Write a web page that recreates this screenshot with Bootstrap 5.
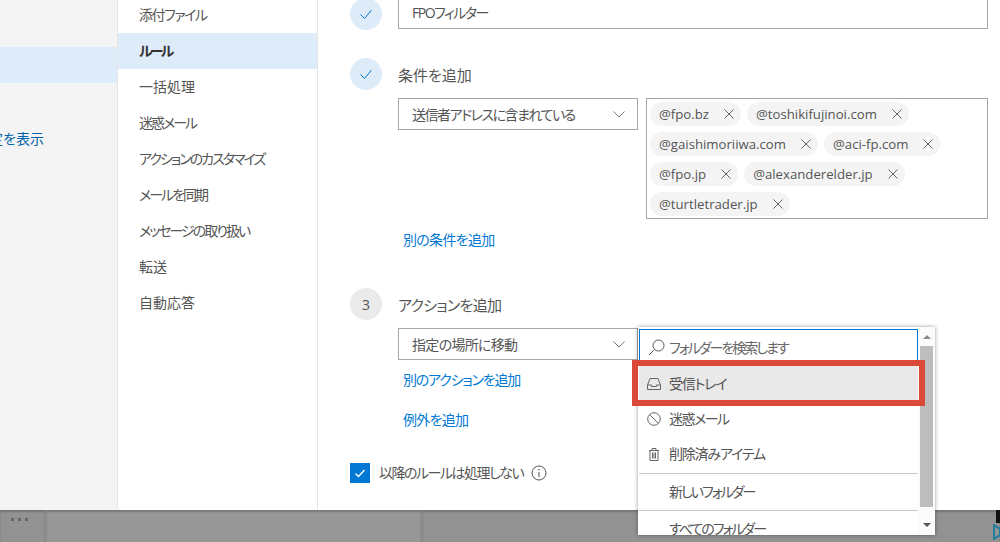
<!DOCTYPE html>
<html lang="ja">
<head>
<meta charset="UTF-8">
<title>ルール</title>
<link href="https://cdn.jsdelivr.net/npm/bootstrap@5.3.0/dist/css/bootstrap.min.css" rel="stylesheet">
<style>
  html, body { height: 542px; overflow: hidden; }
  body { font-family: "Open Sans", "Noto Sans CJK JP", sans-serif; font-size: 14px; color: #555; background: #fff; position: relative; font-feature-settings: "palt"; }
  a { color: #0078d4; text-decoration: none; }
  /* kana in the original font is narrower than Noto, so tighten kana-heavy strings */
  .tight-1 { letter-spacing: -.7px; }
  .tight-2 { letter-spacing: -1.2px; }
  .tight-3 { letter-spacing: -1.5px; }
  .tight-4 { letter-spacing: -2px; }
  .page-main { height: 510px; overflow: hidden; }
  .far-left { width: 118px; background: #f4f4f4; border-right: 1px solid #e6e6e6; padding-top: 47px; overflow: hidden; }
  .far-band { height: 36px; background: #deecf9; }
  .far-link { padding-right: 73px; color: #0062ad; white-space: nowrap; line-height: 36px; height: 36px; margin-top: 38px; }
  .side-list { width: 200px; border-right: 1px solid #e6e6e6; margin-top: -3px; }
  .side-item { height: 36px; line-height: 35px; padding-left: 21px; }
  .side-item.on { background: #deecf9; font-weight: 700; color: #333; letter-spacing: -2.8px; }
  .pane { padding-left: 32px; margin-top: -2px; width: 670px; }
  .step { width: 32px; height: 32px; border-radius: 50%; flex: none; display: flex; align-items: center; justify-content: center; background: #deecf9; }
  .step.gray { background: #eaeaea; color: #555; }
  .step-title { height: 32px; line-height: 35px; font-size: 15px; }
  .field { height: 32px; border: 1px solid #a6a6a6; padding: 0 12px 0 13px; line-height: 29px; background: #fff; }
  .name-field { width: 590px; margin-top: -1px; }
  .pick { width: 240px; }
  .tag-box { width: 342px; height: 121px; border: 1px solid #a6a6a6; padding: 3px; gap: 6px; align-content: flex-start; margin-left: 8px; }
  .tag { height: 24px; line-height: 24px; border-radius: 12px; background: #f4f4f4; padding: 0 7px 0 9px; font-size: 13.2px; gap: 15px; color: #555; }
  .indent { margin-left: 48px; }
  .add-link { padding-left: 5px; line-height: 20px; }
  .tick-box { width: 20px; height: 20px; background: #0078d4; }
  .foot-bar { height: 32px; background: #979797; position: relative; }
  .foot-cell { border-right: 1px solid #8a8a8a; background: #929292; box-shadow: inset 0 2px 2px rgba(0,0,0,.2); }
  .foot-dots { width: 46px; padding: 8px 0 0 11px; gap: 4px; }
  .foot-dot { width: 3px; height: 3px; background: #666; }
  .foot-mid { width: 376px; background: #979797; }
  .foot-end { background: #929292; box-shadow: inset 0 2px 2px rgba(0,0,0,.2); }
  .folder-menu { position: absolute; left: 638px; top: 327px; width: 297px; height: 208px; background: #fff; box-shadow: 0 0 4px rgba(0,0,0,.4); overflow: hidden; }
  .folder-list { width: 280px; padding-left: 1px; }
  .folder-search { height: 37px; border: 1px solid #0078d4; border-bottom: 0; margin-top: 2px; padding: 0 0 2px 8px; gap: 4px; color: #666; }
  .folder-item { height: 35px; padding-left: 8px; gap: 8px; color: #555; flex: none; }
  .folder-item.on { background: #e9e9e9; }
  .folder-gap { height: 2px; }
  .folder-line { border-top: 1px solid #c8c8c8; height: 37px; line-height: 36px; padding-left: 30px; color: #555; }
  .folder-scroll { width: 17px; background: #fbfbfb; }
  .scroll-thumb { width: 13px; height: 161px; background: #bdbdbd; margin: 0 auto; }
  .arr-up, .arr-down { width: 0; height: 0; border-left: 4px solid transparent; border-right: 4px solid transparent; margin: 0 auto; }
  .arr-up { border-bottom: 4px solid #8a8a8a; margin-top: 8px; margin-bottom: 7px; }
  .arr-down { border-top: 4px solid #555; margin-top: 16px; }
  .red-frame { position: absolute; left: 632px; top: 360px; width: 293px; height: 46px; border: 6px solid #db4a39; }
  .corner-black { position: absolute; left: 996px; top: 0; width: 4px; height: 13px; background: #111; }
  .corner-logo { position: absolute; left: 993px; top: 524px; }
</style>
</head>
<body>
  <div class="page-main d-flex">
    <div class="far-left">
      <div class="far-band"></div>
      <div class="far-link d-flex justify-content-end">すべての設定を表示</div>
    </div>

    <div class="side-list">
      <div class="side-item tight-3">添付ファイル</div>
      <div class="side-item on">ルール</div>
      <div class="side-item">一括処理</div>
      <div class="side-item tight-4">迷惑メール</div>
      <div class="side-item tight-4">アクションのカスタマイズ</div>
      <div class="side-item tight-4">メールを同期</div>
      <div class="side-item tight-4">メッセージの取り扱い</div>
      <div class="side-item">転送</div>
      <div class="side-item">自動応答</div>
    </div>

    <div class="pane">
      <div class="d-flex gap-3">
        <div class="step"><svg width="14" height="14" viewBox="0 0 14 14"><path d="M1.5 7.5 5.5 11.5 12.5 3" fill="none" stroke="#0078d4" stroke-width="1"/></svg></div>
        <div class="field name-field tight-3">FPOフィルター</div>
      </div>

      <div class="d-flex gap-3" style="margin-top:28px">
        <div class="step"><svg width="14" height="14" viewBox="0 0 14 14"><path d="M1.5 7.5 5.5 11.5 12.5 3" fill="none" stroke="#0078d4" stroke-width="1"/></svg></div>
        <div class="step-title">条件を追加</div>
      </div>
      <div class="indent d-flex mt-2">
        <div class="field pick d-flex justify-content-between align-items-center">
          <span class="tight-3">送信者アドレスに含まれている</span>
          <svg width="12" height="7" viewBox="0 0 12 7"><path d="M.5.5 6 6 11.5.5" fill="none" stroke="#777"/></svg>
        </div>
        <div class="tag-box d-flex flex-wrap">
          <span class="tag d-inline-flex align-items-center">@fpo.bz <svg width="10" height="10" viewBox="0 0 10 10"><path d="M.5.5l9 9m0-9l-9 9" stroke="#666"/></svg></span>
          <span class="tag d-inline-flex align-items-center">@toshikifujinoi.com <svg width="10" height="10" viewBox="0 0 10 10"><path d="M.5.5l9 9m0-9l-9 9" stroke="#666"/></svg></span>
          <span class="tag d-inline-flex align-items-center">@gaishimoriiwa.com <svg width="10" height="10" viewBox="0 0 10 10"><path d="M.5.5l9 9m0-9l-9 9" stroke="#666"/></svg></span>
          <span class="tag d-inline-flex align-items-center">@aci-fp.com <svg width="10" height="10" viewBox="0 0 10 10"><path d="M.5.5l9 9m0-9l-9 9" stroke="#666"/></svg></span>
          <span class="tag d-inline-flex align-items-center">@fpo.jp <svg width="10" height="10" viewBox="0 0 10 10"><path d="M.5.5l9 9m0-9l-9 9" stroke="#666"/></svg></span>
          <span class="tag d-inline-flex align-items-center">@alexanderelder.jp <svg width="10" height="10" viewBox="0 0 10 10"><path d="M.5.5l9 9m0-9l-9 9" stroke="#666"/></svg></span>
          <span class="tag d-inline-flex align-items-center">@turtletrader.jp <svg width="10" height="10" viewBox="0 0 10 10"><path d="M.5.5l9 9m0-9l-9 9" stroke="#666"/></svg></span>
        </div>
      </div>
      <div class="indent add-link tight-1" style="margin-top:11px"><a href="#">別の条件を追加</a></div>

      <div class="d-flex gap-3" style="margin-top:38px">
        <div class="step gray">3</div>
        <div class="step-title tight-1">アクションを追加</div>
      </div>
      <div class="indent mt-2">
        <div class="field pick d-flex justify-content-between align-items-center">
          <span class="tight-1">指定の場所に移動</span>
          <svg width="12" height="7" viewBox="0 0 12 7"><path d="M.5.5 6 6 11.5.5" fill="none" stroke="#777"/></svg>
        </div>
      </div>
      <div class="indent add-link tight-2" style="margin-top:10px"><a href="#">別のアクションを追加</a></div>
      <div class="indent add-link tight-1" style="margin-top:20px"><a href="#">例外を追加</a></div>

      <div class="d-flex align-items-center" style="margin-top:32px">
        <div class="tick-box d-flex align-items-center justify-content-center">
          <svg width="12" height="12" viewBox="0 0 12 12"><path d="M1.5 6.5 4.5 9.5 10.5 3" fill="none" stroke="#fff" stroke-width="1.4"/></svg>
        </div>
        <span class="tight-3" style="margin-left:9px">以降のルールは処理しない</span>
        <svg class="ms-2" width="16" height="16" viewBox="0 0 16 16"><circle cx="8" cy="8" r="7" fill="none" stroke="#555"/><path d="M8 7v5" stroke="#555"/><circle cx="8" cy="4.8" r=".8" fill="#555"/></svg>
      </div>
    </div>
  </div>

  <div class="foot-bar d-flex">
    <div class="foot-cell foot-dots d-flex"><span class="foot-dot"></span><span class="foot-dot"></span><span class="foot-dot"></span></div>
    <div class="foot-cell foot-mid"></div>
    <div class="foot-end flex-grow-1"></div>
    <div class="corner-black"></div>
  </div>
  <svg class="corner-logo" width="7" height="16" viewBox="0 0 7 16"><path d="M1 1 7 5v6l-6 4z" fill="none" stroke="#1f7f9c" stroke-width="2"/></svg>

  <div class="folder-menu d-flex">
    <div class="folder-list">
      <div class="folder-search d-flex align-items-center">
        <svg width="17" height="17" viewBox="0 0 17 17"><circle cx="10.5" cy="6.5" r="5.5" fill="none" stroke="#555"/><path d="M6.5 10.5 1 16" stroke="#555"/></svg>
        <span class="tight-4">フォルダーを検索します</span>
      </div>
      <div class="folder-item on d-flex align-items-center">
        <svg width="14" height="12" viewBox="0 0 14 12"><path d="M3 .5h8L13.5 7v4.5H.5V7zM.5 7h4v1.5h5V7h4" fill="none" stroke="#666"/></svg>
        <span class="tight-2">受信トレイ</span>
      </div>
      <div class="folder-item d-flex align-items-center">
        <svg width="14" height="14" viewBox="0 0 14 14"><circle cx="7" cy="7" r="6.3" fill="none" stroke="#666"/><path d="M2.5 2.5l9 9" stroke="#666"/></svg>
        <span class="tight-3">迷惑メール</span>
      </div>
      <div class="folder-item d-flex align-items-center">
        <svg width="14" height="14" viewBox="0 0 14 14"><path d="M2 3.5h10M5 3.5v-2h4v2M3 3.5v10h8v-10M5.5 5.5v6M7 5.5v6M8.5 5.5v6" fill="none" stroke="#666"/></svg>
        <span class="tight-2">削除済みアイテム</span>
      </div>
      <div class="folder-gap"></div>
      <div class="folder-line tight-4">新しいフォルダー</div>
      <div class="folder-line tight-4">すべてのフォルダー</div>
    </div>
    <div class="folder-scroll">
      <div class="arr-up"></div>
      <div class="scroll-thumb"></div>
      <div class="arr-down"></div>
    </div>
  </div>
  <div class="red-frame"></div>
</body>
</html>
